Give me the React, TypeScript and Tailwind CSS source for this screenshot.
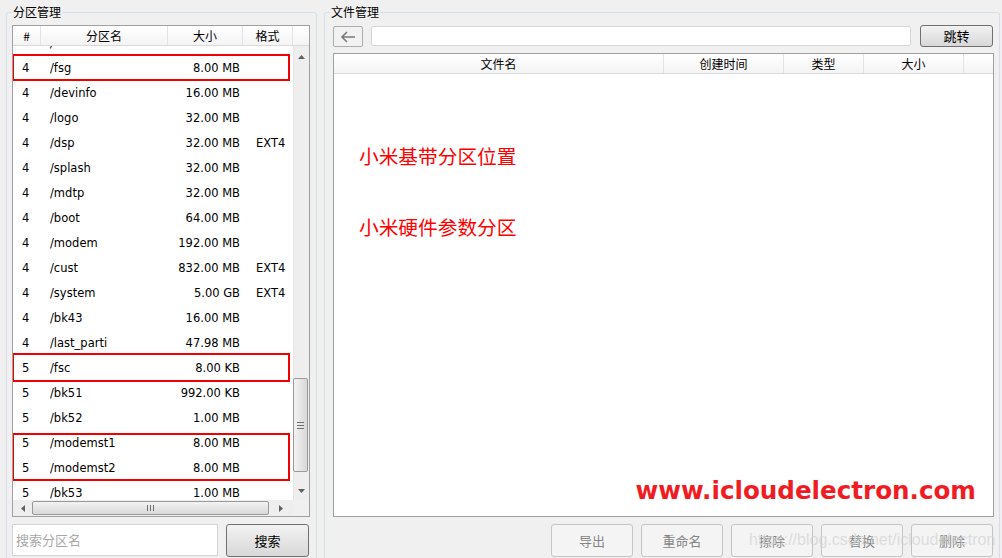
import React from "react";

type Row = [string, string, string, string];

const rows: Row[] = [
  ["", "/", "", ""],
  ["4", "/fsg", "8.00 MB", ""],
  ["4", "/devinfo", "16.00 MB", ""],
  ["4", "/logo", "32.00 MB", ""],
  ["4", "/dsp", "32.00 MB", "EXT4"],
  ["4", "/splash", "32.00 MB", ""],
  ["4", "/mdtp", "32.00 MB", ""],
  ["4", "/boot", "64.00 MB", ""],
  ["4", "/modem", "192.00 MB", ""],
  ["4", "/cust", "832.00 MB", "EXT4"],
  ["4", "/system", "5.00 GB", "EXT4"],
  ["4", "/bk43", "16.00 MB", ""],
  ["4", "/last_parti", "47.98 MB", ""],
  ["5", "/fsc", "8.00 KB", ""],
  ["5", "/bk51", "992.00 KB", ""],
  ["5", "/bk52", "1.00 MB", ""],
  ["5", "/modemst1", "8.00 MB", ""],
  ["5", "/modemst2", "8.00 MB", ""],
  ["5", "/bk53", "1.00 MB", ""],
  ["5", "/bk54", "1.00 MB", ""],
];

const cjk = "font-['Noto_Sans_CJK_SC',sans-serif]";

const Arrow = ({ dir }: { dir: "up" | "down" | "left" | "right" }) => {
  const pts = {
    up: "0,4 3.5,0 7,4",
    down: "0,0 3.5,4 7,0",
    left: "4,0 0,3.5 4,7",
    right: "0,0 4,3.5 0,7",
  }[dir];
  const vertical = dir === "up" || dir === "down";
  return (
    <svg
      width={vertical ? 7 : 4}
      height={vertical ? 4 : 7}
      viewBox={vertical ? "0 0 7 4" : "0 0 4 7"}
    >
      <polygon points={pts} fill="#606060" />
    </svg>
  );
};

const HeaderCell = ({ w, label }: { w: string; label: string }) => (
  <div
    className={`${w} h-full flex items-center justify-center border-r border-[#e3e3e3] text-[12px] text-black ${cjk}`}
  >
    {label}
  </div>
);

const GroupBox = ({
  title,
  className,
  children,
}: {
  title: string;
  className: string;
  children: React.ReactNode;
}) => (
  <div
    className={`relative border border-[#d5dfe5] rounded-[3px] h-[560px] ${className}`}
  >
    <span
      className={`absolute -top-[9px] left-[5px] bg-[#f0f0f0] px-[1px] text-[12px] leading-[16px] text-black ${cjk}`}
    >
      {title}
    </span>
    {children}
  </div>
);

const ActionButton = ({ label }: { label: string }) => (
  <div
    className={`w-[82px] h-[33px] flex items-center justify-center border border-[#c4c4c4] rounded-[3px] bg-[#f4f4f4] text-[13px] text-[#858585] ${cjk}`}
  >
    {label}
  </div>
);

export default function App() {
  return (
    <div className="relative w-[1002px] h-[558px] bg-[#f0f0f0] overflow-hidden flex pt-[12px]">
      {/* 分区管理 */}
      <GroupBox title="分区管理" className="ml-[6px] w-[311px]">
        <div className="pl-[5px] pt-[12px]">
          <div className="w-[298px] h-[492px] border border-[#a0a0a0] bg-white flex flex-col">
            <div className="h-[20px] flex bg-gradient-to-b from-white to-[#f4f4f4] border-b border-[#dadada]">
              <HeaderCell w="w-[28px]" label="#" />
              <HeaderCell w="w-[127px]" label="分区名" />
              <HeaderCell w="w-[75px]" label="大小" />
              <HeaderCell w="w-[50px]" label="格式" />
            </div>
            <div className="flex h-[454px]">
              <div className="relative w-[280px] h-full overflow-hidden">
                <div className="-mt-[15px] font-['DejaVu_Sans',sans-serif] text-[11.5px] text-black">
                  {rows.map((r, i) => (
                    <div key={i} className="h-[25px] flex items-center">
                      <div className="w-[28px] pl-[9px]">{r[0]}</div>
                      <div className="w-[127px] pl-[9px]">{r[1]}</div>
                      <div className="w-[75px] text-right pr-[3px]">{r[2]}</div>
                      <div className="w-[50px] pl-[13px]">{r[3]}</div>
                    </div>
                  ))}
                </div>
                <div className="absolute left-[-1px] top-[8px] w-[278px] h-[27px] border-2 border-[#f00000]" />
                <div className="absolute left-[-1px] top-[307px] w-[278px] h-[29px] border-2 border-[#f00000]" />
                <div className="absolute left-[-1px] top-[387px] w-[278px] h-[48px] border-2 border-[#f00000]" />
              </div>
              <div className="w-[16px] h-full bg-[#eeeeee] border-l border-[#e6e6e6] flex flex-col items-center">
                <div className="h-[16px] flex items-center justify-center mt-[3px]">
                  <Arrow dir="up" />
                </div>
                <div className="flex-1 w-full relative">
                  <div className="absolute left-[-1px] right-[1px] top-[313px] h-[94px] rounded-[2px] border border-[#9a9a9a] bg-gradient-to-r from-[#f3f3f3] to-[#d8d8d8] flex flex-col items-center justify-center gap-[2px]">
                    <div className="w-[7px] h-px bg-[#707070]" />
                    <div className="w-[7px] h-px bg-[#707070]" />
                    <div className="w-[7px] h-px bg-[#707070]" />
                  </div>
                </div>
                <div className="h-[16px] flex items-center justify-center mb-[1px]">
                  <Arrow dir="down" />
                </div>
              </div>
            </div>
            <div className="flex h-[16px]">
              <div className="w-[280px] h-full bg-[#eeeeee] flex items-center">
                <div className="w-[19px] flex justify-center">
                  <Arrow dir="left" />
                </div>
                <div className="w-[237px] h-[14px] rounded-[2px] border border-[#9a9a9a] bg-gradient-to-b from-[#f3f3f3] to-[#d8d8d8] flex items-center justify-center gap-[2px]">
                  <div className="w-px h-[6px] bg-[#707070]" />
                  <div className="w-px h-[6px] bg-[#707070]" />
                  <div className="w-px h-[6px] bg-[#707070]" />
                </div>
                <div className="flex-1 flex justify-center">
                  <Arrow dir="right" />
                </div>
              </div>
              <div className="flex-1 bg-[#f0f0f0]" />
            </div>
          </div>
          <div className="mt-[7px] flex">
            <div
              className={`w-[206px] h-[32px] bg-white border border-[#d4d4d4] flex items-center pl-[3px] text-[13px] text-[#a8a8a8] ${cjk}`}
            >
              搜索分区名
            </div>
            <div
              className={`ml-[8px] w-[83px] h-[33px] rounded-[3px] border border-[#707070] bg-gradient-to-b from-[#f2f2f2] to-[#d8d8d8] flex items-center justify-center text-[13px] text-black ${cjk}`}
            >
              搜索
            </div>
          </div>
        </div>
      </GroupBox>

      {/* 文件管理 */}
      <GroupBox title="文件管理" className="ml-[7px] w-[676px]">
        <div className="pl-[8px] pt-[13px]">
          <div className="flex items-start h-[21px]">
            <div className="w-[30px] h-[21px] rounded-[2px] border border-[#adadad] bg-[#f2f2f2] flex items-center justify-center">
              <svg width="16" height="12" viewBox="0 0 16 12">
                <path
                  d="M15 6H2M7 1L2 6l5 5"
                  stroke="#7a7a7a"
                  strokeWidth="1.6"
                  fill="none"
                />
              </svg>
            </div>
            <div className="ml-[8px] w-[540px] h-[20px] bg-white border border-[#d6d6d6] rounded-[2px]" />
            <div
              className={`ml-[9px] -mt-[1px] w-[73px] h-[22px] rounded-[3px] border border-[#707070] bg-gradient-to-b from-[#f2f2f2] to-[#d8d8d8] flex items-center justify-center text-[13px] text-black ${cjk}`}
            >
              跳转
            </div>
          </div>
          <div className="relative mt-[6px] w-[661px] h-[464px] border border-[#a0a0a0] bg-white flex flex-col">
            <div className="h-[20px] flex bg-gradient-to-b from-white to-[#f4f4f4] border-b border-[#dadada]">
              <HeaderCell w="w-[330px]" label="文件名" />
              <HeaderCell w="w-[120px]" label="创建时间" />
              <HeaderCell w="w-[80px]" label="类型" />
              <HeaderCell w="w-[100px]" label="大小" />
            </div>
            <div
              className={`pl-[25px] pt-[70px] flex flex-col gap-[47px] text-[19.7px] leading-[24px] text-[#ff0000] ${cjk}`}
            >
              <div>小米基带分区位置</div>
              <div>小米硬件参数分区</div>
            </div>
            <div className="absolute right-[17px] bottom-[10px] font-['DejaVu_Sans',sans-serif] font-bold text-[24.6px] leading-[30px] text-[#f01c24]">
              www.icloudelectron.com
            </div>
          </div>
          <div className="mt-[7px] w-[661px] flex justify-end gap-[8px] pr-[1px]">
            <ActionButton label="导出" />
            <ActionButton label="重命名" />
            <ActionButton label="擦除" />
            <ActionButton label="替换" />
            <ActionButton label="删除" />
          </div>
        </div>
      </GroupBox>

      <div className="absolute left-[749px] top-[529px] font-['Liberation_Sans',sans-serif] text-[16px] leading-[22px] text-[#d2d2d2]/70">
        https://blog.csdn.net/icloudelectron
      </div>
    </div>
  );
}
